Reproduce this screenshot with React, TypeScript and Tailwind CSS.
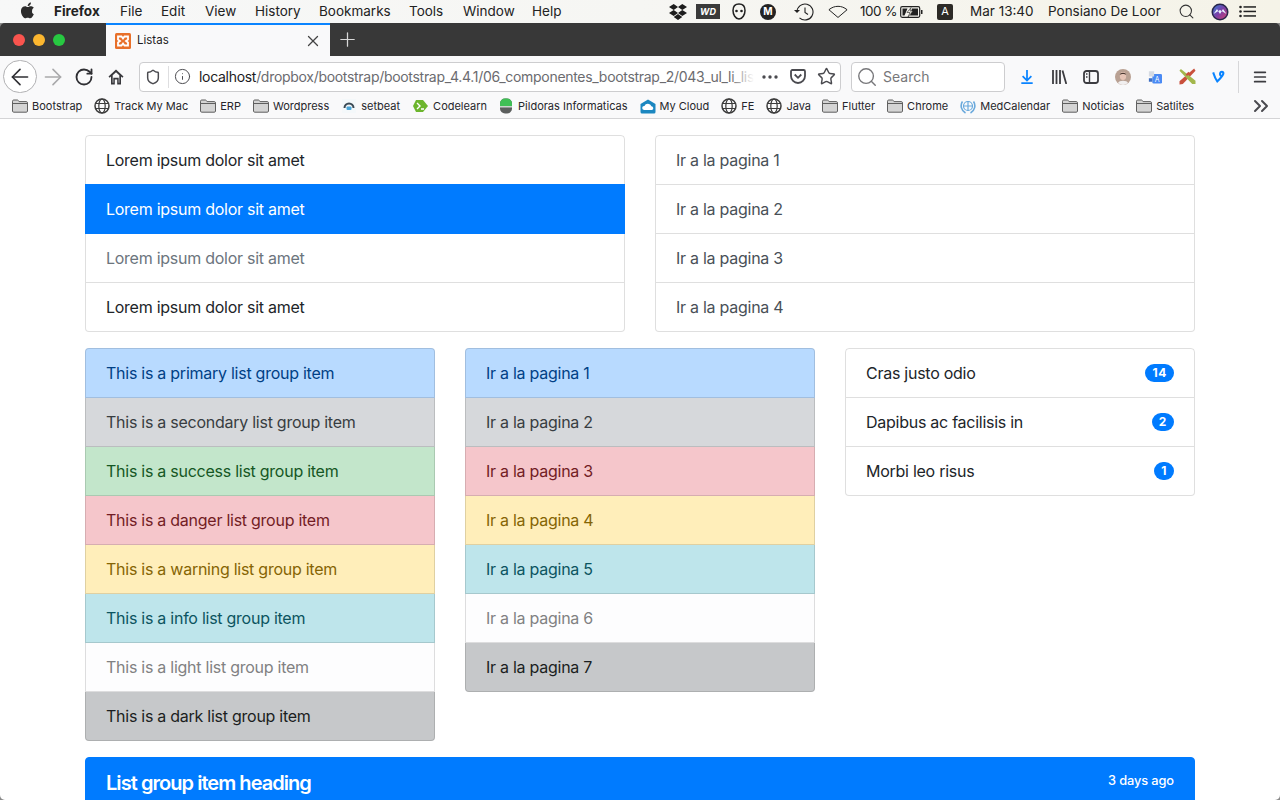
import React from 'react'
import { ArrowLeft, ArrowRight, RotateCw, Shield, Info, Star, Search, X, Plus, Menu, ChevronsRight } from 'lucide-react'

const sans = "font-['Inter','Noto_Sans',sans-serif]"

const Folder = () => (
  <svg width="16" height="14" viewBox="0 0 16 14" className="shrink-0">
    <path d="M.5 12V2.2C.5 1.5 1 1 1.7 1h3.6c.5 0 .8.2 1.1.6l.7 1h7.2c.7 0 1.2.5 1.2 1.2V12c0 .7-.5 1.2-1.2 1.2H1.7C1 13.2.5 12.7.5 12z" fill="#d4d4d4" stroke="#5f5f5f" />
    <path d="M.8 4.5h14.4" stroke="#5f5f5f" />
  </svg>
)

const Globe = () => (
  <svg width="16" height="16" viewBox="0 0 16 16" fill="none" stroke="#3c3c3c" strokeWidth="1.2" className="shrink-0">
    <circle cx="8" cy="8" r="7" strokeWidth="1.5" />
    <ellipse cx="8" cy="8" rx="3.2" ry="7" />
    <path d="M1 5.5h14M1 10.5h14" />
  </svg>
)

const Setbeat = () => (
  <svg width="14" height="14" viewBox="0 0 14 14" className="shrink-0">
    <rect width="14" height="14" fill="#f4f8fa" />
    <path d="M2.5 9a4.5 4.5 0 0 1 9 0" fill="none" stroke="#3b4a55" strokeWidth="2" />
    <rect x="4.5" y="7.5" width="5" height="3.5" rx="1" fill="#4aa6d8" />
  </svg>
)

const Codelearn = () => (
  <svg width="16" height="16" viewBox="0 0 16 16" className="shrink-0">
    <path d="M3 2h7l5 6-5 6H3L0 8z" fill="#6cb52d" />
    <path d="M4 5l3 3-3 3M8 11h3" fill="none" stroke="#fff" strokeWidth="1.4" />
  </svg>
)

const Pildoras = () => (
  <svg width="14" height="16" viewBox="0 0 14 16" className="shrink-0">
    <rect x="1" y="0.5" width="12" height="15" rx="5" fill="#5c5f5e" />
    <path d="M1 8V5.5a5 5 0 0 1 5-5h2a5 5 0 0 1 5 5V8z" fill="#3fbf55" />
    <rect x="1" y="8" width="12" height="1.5" fill="#c9d4cc" />
  </svg>
)

const CloudHome = () => (
  <svg width="16" height="15" viewBox="0 0 16 15" className="shrink-0">
    <path d="M8 .5L15.5 5v8a1.5 1.5 0 0 1-1.5 1.5H2A1.5 1.5 0 0 1 .5 13V5z" fill="#1b87c0" />
    <path d="M4 11a2 2 0 0 1 .4-4 3.7 3.7 0 0 1 7 .3A1.9 1.9 0 0 1 12 11z" fill="#fff" />
  </svg>
)

const Who = () => (
  <svg width="16" height="16" viewBox="0 0 16 16" fill="none" stroke="#6aa9dc" strokeWidth="1.2" className="shrink-0">
    <circle cx="8" cy="8" r="4.5" />
    <path d="M8 3v10M3.5 8h9" />
    <path d="M2.5 3.5C0 7 1 12.5 5.5 15M13.5 3.5c2.500 3.500 1.500 9-3 11.500" strokeWidth="1.600" />
  </svg>
)

const Dropbox = () => (
  <svg width="18" height="16" viewBox="0 0 18 16" fill="#1d1d1d">
    <path d="M4.700 0L0 3l4.700 3 4.300-3zM13.300 0L9 3l4.300 3L18 3zM0 9l4.700 3L9 9 4.700 6zM18 9l-4.700-3L9 9l4.300 3zM4.700 13L9 16l4.300-3L9 10z" />
  </svg>
)

const Battery = () => (
  <svg width="23" height="12" viewBox="0 0 23 12" fill="none">
    <rect x="0.700" y="0.700" width="19" height="10.600" rx="1.500" stroke="#222" strokeWidth="1.200" />
    <rect x="21" y="4" width="1.500" height="4" fill="#222" />
    <path d="M2.500 2.500h5l-3 7h-2zM12 2.500h6v7h-8z" fill="#222" />
    <path d="M11 1.500L7 6.500h3l-2 4.500 5-6h-3z" fill="#f4f2e8" stroke="#222" strokeWidth="0.600" />
  </svg>
)

const MenuBar = () => (
  <div className={`h-[23px] shrink-0 flex items-center bg-gradient-to-r from-[#f7f8f8] via-[#f6f6f3] to-[#f5f3e8] text-[13.500px] text-[#222] ${sans}`}>
    <svg width="15" height="17" viewBox="0 0 15 18" fill="#2c2c2c" className="ml-[20px] mr-[19px] -mt-[2px]">
      <path d="M12.300 9.500c0-2.200 1.800-3.200 1.900-3.300-1-1.500-2.600-1.700-3.200-1.700-1.300-.1-2.600.8-3.300.8s-1.700-.8-2.800-.8C3.400 4.600 2 5.400 1.300 6.700c-1.500 2.600-.4 6.400 1.100 8.500.7 1 1.500 2.200 2.600 2.100 1-.1 1.500-.7 2.700-.7s1.600.7 2.700.7 1.900-1 2.600-2.100c.8-1.200 1.200-2.300 1.200-2.400-.1 0-2.300-.9-1.900-2.800zM10.200 3.200c.6-.7 1-1.700.9-2.700-.8 0-1.900.6-2.500 1.300-.5.600-1 1.600-.9 2.500.9.100 1.900-.4 2.500-1.100z" />
    </svg>
    <span className="font-bold w-[66px]">Firefox</span>
    <span className="w-[41px]">File</span>
    <span className="w-[44px]">Edit</span>
    <span className="w-[50px]">View</span>
    <span className="w-[64px]">History</span>
    <span className="w-[90px]">Bookmarks</span>
    <span className="w-[54px]">Tools</span>
    <span className="w-[69px]">Window</span>
    <span>Help</span>
    <div className="ml-auto flex items-center">
      <Dropbox />
      <span className="ml-[9px] w-[24px] h-[15px] bg-[#3a3a3a] text-white text-[9px] font-bold italic flex items-center justify-center">WD</span>
      <svg width="14" height="17" viewBox="0 0 14 17" fill="none" className="ml-[12px]">
        <path d="M7 1c4 0 6 2.500 6 6.500S10.500 16 7 16 1 11.500 1 7.500 3 1 7 1z" stroke="#222" strokeWidth="1.500" />
        <circle cx="4.500" cy="8" r="1.300" fill="#222" />
        <circle cx="9.500" cy="8" r="1.300" fill="#222" />
      </svg>
      <span className="ml-[14px] w-[16px] h-[16px] rounded-full bg-[#222] text-white text-[10px] font-bold flex items-center justify-center">M</span>
      <svg width="22" height="18" viewBox="0 0 22 18" fill="none" stroke="#222" strokeWidth="1.100" className="ml-[17px]">
        <path d="M4 9a8 8 0 1 1 2.500 5.800" />
        <path d="M1 7l3 3 3-3" fill="#222" stroke="none" />
        <path d="M12 4.500V9.500l3 2" />
      </svg>
      <svg width="20" height="14" viewBox="0 0 22 14" fill="none" stroke="#222" strokeWidth="1.100" className="ml-[13px]">
        <path d="M1 4.500C7 -.5 15-.5 21 4.500L11 13z" />
      </svg>
      <span className="ml-[12px] w-[35px] whitespace-nowrap tracking-[-0.5px]">100 %</span>
      <span className="ml-[5px] flex"><Battery /></span>
      <span className="ml-[14px] w-[16px] h-[16px] rounded-[2px] bg-[#2c2a26] text-white text-[11px] flex items-center justify-center">A</span>
      <span className="ml-[17px] w-[64px] whitespace-nowrap">Mar 13:40</span>
      <span className="ml-[14px] w-[113px] whitespace-nowrap">Ponsiano De Loor</span>
      <Search size={17} strokeWidth={1.500} className="ml-[17px] text-[#333]" />
      <svg width="18" height="18" viewBox="0 0 18 18" className="ml-[16px]">
        <defs>
          <linearGradient id="siri" x1="0" y1="0" x2="1" y2="1">
            <stop offset="0" stopColor="#3a7bd5" />
            <stop offset="0.500" stopColor="#7a3fa8" />
            <stop offset="1" stopColor="#d0406f" />
          </linearGradient>
        </defs>
        <circle cx="9" cy="9" r="8.500" fill="#27264a" />
        <circle cx="9" cy="9" r="7" fill="url(#siri)" />
        <path d="M2.500 11L6 6l3 5 3-5 3.500 5L9 7z" fill="#e8f2ff" />
      </svg>
      <svg width="17" height="13" viewBox="0 0 17 13" fill="#222" className="ml-[10px] mr-[24px]">
        <circle cx="1.500" cy="2" r="1.300" />
        <circle cx="1.500" cy="6.500" r="1.300" />
        <circle cx="1.500" cy="11" r="1.300" />
        <rect x="4.500" y="1.200" width="12.500" height="1.500" />
        <rect x="4.500" y="5.700" width="12.500" height="1.500" />
        <rect x="4.500" y="10.200" width="12.500" height="1.500" />
      </svg>
    </div>
  </div>
)

const TabBar = () => (
  <div className={`h-[33px] shrink-0 flex bg-[#383838] rounded-t-[5px] ${sans}`}>
    <div className="w-[106px] flex items-center gap-[8px] pl-[13px]">
      <span className="w-[12px] h-[12px] rounded-full bg-[#f9544e]" />
      <span className="w-[12px] h-[12px] rounded-full bg-[#fbb62f]" />
      <span className="w-[12px] h-[12px] rounded-full bg-[#27c841]" />
    </div>
    <div className="w-[224px] flex items-center bg-[#f9f9fa] border-t-2 border-[#0a84ff] pl-[9px] pr-[8px]">
      <svg width="16" height="16" viewBox="0 0 16 16" className="shrink-0">
        <rect width="16" height="16" rx="1.500" fill="#e8702a" />
        <path d="M3 3.500h3.500L8 5.500l1.500-2H13v3l-2 1.500 2 1.500v3H9.500L8 10.500l-1.500 2H3v-3L5 8 3 6.500z" fill="none" stroke="#fff" strokeWidth="1.800" />
      </svg>
      <span className="ml-[6px] text-[11.500px] text-[#1c1b22]">Listas</span>
      <X size={18} strokeWidth={1.700} className="ml-auto text-[#444]" />
    </div>
    <Plus size={23} strokeWidth={1.300} className="ml-[6px] mt-[5px] text-[#d8d8d8]" />
  </div>
)

const NavBar = () => (
  <div className={`h-[37px] shrink-0 flex items-center pt-[4px] bg-[#f9f9fa] ${sans}`}>
    <div className="ml-[3px] w-[34px] h-[33px] rounded-full bg-white border border-[#b1b1b3] flex items-center justify-center">
      <ArrowLeft size={26} strokeWidth={1.500} className="text-[#2f2f33]" />
    </div>
    <ArrowRight size={26} strokeWidth={1.500} className="ml-[3px] text-[#a9a9ab]" />
    <RotateCw size={20} strokeWidth={2.200} className="ml-[8px] text-[#2f2f33]" />
    <svg width="16" height="16" viewBox="0 0 16 16" fill="#38383c" className="ml-[14px] mr-[2px]">
      <path d="M8 0.500L0.500 7.500l1.200 1.300L3 7.600V15.500h3.800v-5h2.400v5H13V7.600l1.300 1.200 1.200-1.300z" />
      <path d="M8 3.200L4.700 6.300v7.500h.6v-5h5.400v5h.6V6.300z" fill="#f9f9fa" />
    </svg>
    <div className="ml-[13px] w-[702px] h-[30px] bg-white border border-[#cdcdcf] rounded-[4px] flex items-center">
      <Shield size={16} strokeWidth={2.200} className="ml-[5px] text-[#4a4a4f]" />
      <span className="ml-[7px] h-[22px] border-l border-[#dedee0]" />
      <Info size={17} strokeWidth={1.400} className="ml-[5px] text-[#4a4a4f]" />
      <div className="relative ml-[8px] w-[555px] overflow-hidden whitespace-nowrap text-[14px] tracking-[-0.3px] text-[#6b6b6f]">
        <span className="text-[#1c1b22]">localhost</span>/dropbox/bootstrap/bootstrap_4.4.1/06_componentes_bootstrap_2/043_ul_li_lis
        <span className="absolute right-0 top-0 h-full w-[24px] bg-gradient-to-r from-white/0 to-white" />
      </div>
      <svg width="16" height="4" viewBox="0 0 16 4" fill="#4a4a4f" className="ml-[8px]">
        <circle cx="2" cy="2" r="1.700" />
        <circle cx="8" cy="2" r="1.700" />
        <circle cx="14" cy="2" r="1.700" />
      </svg>
      <svg width="16" height="15" viewBox="0 0 16 15" fill="none" stroke="#4a4a4f" strokeWidth="1.800" className="ml-[12px]">
        <path d="M1 2.500c0-.8.500-1.500 1.300-1.500h11.400c.8 0 1.300.7 1.300 1.500V7a7 7 0 0 1-14 0z" />
        <path d="M4.700 5.500L8 8.800l3.300-3.300" />
      </svg>
      <Star size={19} strokeWidth={1.800} className="ml-[11px] text-[#4a4a4f]" />
    </div>
    <div className="ml-[10px] w-[154px] h-[30px] bg-white border border-[#cdcdcf] rounded-[4px] flex items-center text-[14px] text-[#77777a]">
      <Search size={22} strokeWidth={1.500} className="ml-[4px] text-[#77777a]" />
      <span className="ml-[5px]">Search</span>
    </div>
    <svg width="14" height="16" viewBox="0 0 16 16" fill="none" stroke="#0a84ff" strokeWidth="2" className="ml-[15px]">
      <path d="M8 0v11M3 7l5 5 5-5M1.500 15h13" />
    </svg>
    <svg width="15" height="14" viewBox="0 0 15 14" fill="none" stroke="#3c3c40" strokeWidth="1.800" className="ml-[18px]">
      <path d="M1 0v14M4.500 0v14M8 0v14M10.500 0.500l3.800 13.500" />
    </svg>
    <svg width="16" height="14" viewBox="0 0 16 14" fill="none" stroke="#3c3c40" strokeWidth="1.800" className="ml-[16px]">
      <rect x="1" y="1" width="14" height="12" rx="2.500" />
      <path d="M6.500 1v12M3 4h1.500M3 7h1.500" strokeWidth="1.400" />
    </svg>
    <svg width="16" height="16" viewBox="0 0 16 16" className="ml-[16px]">
      <circle cx="8" cy="8" r="8" fill="#b9a193" />
      <ellipse cx="8" cy="7" rx="3.200" ry="4" fill="#e6c4b6" />
      <path d="M4.800 6c0-3 6.400-3 6.400 0-1.500-1.300-4.900-1.300-6.400 0z" fill="#4a3a33" />
      <path d="M3 14c1-3 9-3 10 0a8 8 0 0 1-10 0z" fill="#f1efef" />
    </svg>
    <svg width="14" height="15" viewBox="0 0 16 16" className="ml-[17px]">
      <rect x="5" y="5" width="11" height="11" rx="1.500" fill="#4a8af4" />
      <rect x="1" y="2" width="6" height="6" fill="#d6dbe3" />
      <rect x="1" y="10" width="4" height="4" fill="#3e6fc4" />
      <text x="10.500" y="14" fontSize="8" fill="#fff" textAnchor="middle" fontFamily="Inter, sans-serif">A</text>
    </svg>
    <svg width="17" height="17" viewBox="0 0 18 18" className="ml-[17px]">
      <path d="M16 0.500L17.500 3 4 17 0.500 17.500 0.500 14z" fill="#c9503c" />
      <path d="M2 1L0.500 3 14 17l3.500 0 0-3.500z" fill="#a3b74c" />
      <path d="M7 7l3-3 1.500 1.500-3 3z" fill="#c9503c" />
    </svg>
    <svg width="13" height="15" viewBox="0 0 16 16" fill="none" stroke="#0a84ff" strokeWidth="2.600" className="ml-[16px]">
      <path d="M1.500 3c1 3 2 7 5 11 3-3 7.500-7 7.500-10 0-2.500-3.500-2.500-4 0-.4 2 .5 3.500 2 3.500" />
    </svg>
    <span className="ml-[13px] h-[32px] border-l border-[#d7d7d9]" />
    <Menu size={16} strokeWidth={2.600} className="ml-[13px] text-[#3c3c40]" />
  </div>
)

const BOOKMARKS: { icon: React.ReactNode; label: string; cls?: string }[] = [
  { icon: <Folder />, label: 'Bootstrap', cls: 'gap-[4px]' },
  { icon: <Globe />, label: 'Track My Mac', cls: 'gap-[4px]' },
  { icon: <Folder />, label: 'ERP', cls: 'gap-[4px]' },
  { icon: <Folder />, label: 'Wordpress', cls: 'gap-[4px]' },
  { icon: <Setbeat />, label: 'setbeat', cls: 'gap-[5px] ml-[1px]' },
  { icon: <Codelearn />, label: 'Codelearn', cls: 'gap-[4px] ml-[1px]' },
  { icon: <Pildoras />, label: 'Pildoras Informaticas', cls: 'gap-[5px]' },
  { icon: <CloudHome />, label: 'My Cloud', cls: 'gap-[4px]' },
  { icon: <Globe />, label: 'FE', cls: 'gap-[4px]' },
  { icon: <Globe />, label: 'Java', cls: 'gap-[4px]' },
  { icon: <Folder />, label: 'Flutter', cls: 'gap-[4px] -ml-[1px]' },
  { icon: <Folder />, label: 'Chrome', cls: 'gap-[4px]' },
  { icon: <Who />, label: 'MedCalendar', cls: 'gap-[4px]' },
  { icon: <Folder />, label: 'Noticias', cls: 'gap-[4px]' },
  { icon: <Folder />, label: 'Satlites', cls: 'gap-[4px]' },
]

const BookmarksBar = () => (
  <div className={`h-[26px] shrink-0 flex items-center bg-[#f9f9fa] border-b border-[#d4d4d6] pl-[12px] pt-[1px] text-[11px] text-[#26262b] ${sans}`}>
    <div className="flex items-center gap-[12px]">
      {BOOKMARKS.map((b) => (
        <div key={b.label} className={`flex items-center whitespace-nowrap ${b.cls}`}>
          {b.icon}
          <span>{b.label}</span>
        </div>
      ))}
    </div>
    <ChevronsRight size={24} strokeWidth={2} className="ml-auto mr-[7px] text-[#4a4a4f]" />
  </div>
)

const ITEM = 'px-5 py-3 border border-black/[.125] border-t-0 first:border-t first:rounded-t-[4px] last:rounded-b-[4px]'

const VARIANTS = [
  { name: 'primary', cls: 'bg-[#b8daff] text-[#004085]' },
  { name: 'secondary', cls: 'bg-[#d6d8db] text-[#383d41]' },
  { name: 'success', cls: 'bg-[#c3e6cb] text-[#155724]' },
  { name: 'danger', cls: 'bg-[#f5c6cb] text-[#721c24]' },
  { name: 'warning', cls: 'bg-[#ffeeba] text-[#856404]' },
  { name: 'info', cls: 'bg-[#bee5eb] text-[#0c5460]' },
  { name: 'light', cls: 'bg-[#fdfdfe] text-[#818182]' },
  { name: 'dark', cls: 'bg-[#c6c8ca] text-[#1b1e21]' },
]

const LINK_VARIANTS = [
  'bg-[#b8daff] text-[#004085]',
  'bg-[#d6d8db] text-[#383d41]',
  'bg-[#f5c6cb] text-[#721c24]',
  'bg-[#ffeeba] text-[#856404]',
  'bg-[#bee5eb] text-[#0c5460]',
  'bg-[#fdfdfe] text-[#818182]',
  'bg-[#c6c8ca] text-[#1b1e21]',
]

const BADGES = [
  { label: 'Cras justo odio', count: 14 },
  { label: 'Dapibus ac facilisis in', count: 2 },
  { label: 'Morbi leo risus', count: 1 },
]

const Page = () => (
  <div className={`flex-1 min-h-0 overflow-hidden bg-white rounded-b-[5px] text-[16px] leading-6 tracking-[-0.26px] text-[#212529] ${sans}`}>
    <div className="w-[1140px] mx-auto px-[15px] pt-4 flex flex-col gap-4">
      <div className="grid grid-cols-2 gap-[30px]">
        <ul>
          <li className={ITEM}>Lorem ipsum dolor sit amet</li>
          <li className={`${ITEM} -mt-px border-t! border-[#007bff]! bg-[#007bff] text-white`}>Lorem ipsum dolor sit amet</li>
          <li className={`${ITEM} text-[#6c757d]`}>Lorem ipsum dolor sit amet</li>
          <li className={ITEM}>Lorem ipsum dolor sit amet</li>
        </ul>
        <ul>
          {[1, 2, 3, 4].map((n) => (
            <li key={n} className={`${ITEM} text-[#495057]`}>Ir a la pagina {n}</li>
          ))}
        </ul>
      </div>
      <div className="grid grid-cols-3 gap-[30px] items-start">
        <ul>
          {VARIANTS.map((v) => (
            <li key={v.name} className={`${ITEM} ${v.cls}`}>This is a {v.name} list group item</li>
          ))}
        </ul>
        <ul>
          {LINK_VARIANTS.map((cls, i) => (
            <li key={cls} className={`${ITEM} ${cls}`}>Ir a la pagina {i + 1}</li>
          ))}
        </ul>
        <ul>
          {BADGES.map((b) => (
            <li key={b.label} className={`${ITEM} flex items-center justify-between`}>
              {b.label}
              <span className="rounded-full bg-[#007bff] text-white text-[12px] font-bold leading-none tracking-[0.5px] px-[7.200px] py-[3px]">{b.count}</span>
            </li>
          ))}
        </ul>
      </div>
      <div className="bg-[#007bff] text-white rounded-t-[4px] px-5 pt-[13px] pb-3 border border-[#007bff]">
        <div className="flex justify-between">
          <h5 className="text-[20px] leading-6 font-semibold tracking-[-0.95px]">List group item heading</h5>
          <small className="text-[12.800px] leading-[19px] font-medium tracking-[-0.1px]">3 days ago</small>
        </div>
      </div>
    </div>
  </div>
)

export default function App() {
  return (
    <div className="h-screen flex flex-col overflow-hidden bg-[#8a8a8a]">
      <MenuBar />
      <TabBar />
      <NavBar />
      <BookmarksBar />
      <Page />
    </div>
  )
}
